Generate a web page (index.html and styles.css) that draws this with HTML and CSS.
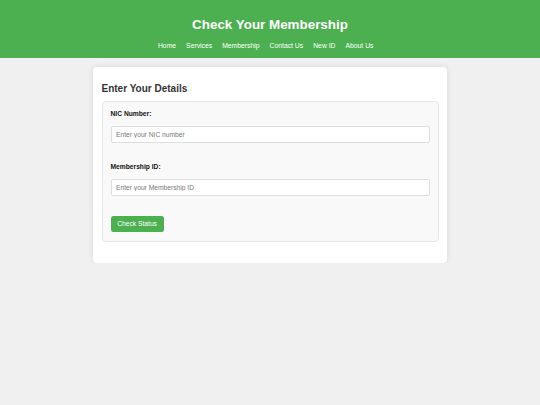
FILE: index.html
```html
<!DOCTYPE html>
<html lang="en">
<head>
<meta charset="utf-8">
<title>Check Your Membership</title>
<link rel="stylesheet" href="styles.css">
</head>
<body>
<header class="site-header">
  <h1 class="site-title">Check Your Membership</h1>
  <nav class="site-nav">
    <a href="#">Home</a>
    <a href="#">Services</a>
    <a href="#">Membership</a>
    <a href="#">Contact Us</a>
    <a href="#">New ID</a>
    <a href="#">About Us</a>
  </nav>
</header>
<main class="card">
  <h2 class="card-title">Enter Your Details</h2>
  <form class="form-box">
    <div class="field">
      <label class="field-label" for="nic">NIC Number:</label>
      <input class="field-input" id="nic" type="text" placeholder="Enter your NIC number">
    </div>
    <div class="field">
      <label class="field-label" for="mid">Membership ID:</label>
      <input class="field-input" id="mid" type="text" placeholder="Enter your Membership ID">
    </div>
    <button class="btn" type="button">Check Status</button>
  </form>
</main>
</body>
</html>
```

FILE: styles.css
```css
* { box-sizing: border-box; }

html, body {
  margin: 0;
  padding: 0;
}

body {
  background: #f0f0f0;
  font-family: "Liberation Sans", Arial, sans-serif;
  color: #333;
}

.site-header {
  background: #4caf50;
  color: #fff;
  text-align: center;
  padding: 16.5px 0 0;
  height: 58px;
}

.site-title {
  margin: 0 0 10px;
  font-size: 13.4px;
  line-height: 15.4px;
  font-weight: bold;
}

.site-nav {
  display: flex;
  justify-content: center;
  gap: 10px;
  padding-right: 8.6px;
  font-size: 6.8px;
  line-height: 7.8px;
}

.site-nav a {
  color: #fff;
  text-decoration: none;
}

.card {
  width: 354px;
  margin: 9px auto 0;
  background: #fff;
  border-radius: 4px;
  box-shadow: 0 0 6px rgba(0, 0, 0, 0.1);
  padding: 8.7px 8.5px 21px;
}

.card-title {
  margin: 7.5px 0 6.5px;
  font-size: 10px;
  line-height: 11.5px;
  font-weight: bold;
  color: #333;
}

.form-box {
  background: #f9f9f9;
  border: 1px solid #e6e6e6;
  border-radius: 4px;
  padding: 8px 8px 8.7px;
  display: flex;
  flex-direction: column;
}

.field {
  display: flex;
  flex-direction: column;
  margin-bottom: 20.3px;
}

.field-label {
  font-size: 6.7px;
  line-height: 7.7px;
  font-weight: bold;
  color: #111;
  margin-bottom: 8.5px;
}

.field-input {
  height: 16.4px;
  border: 1px solid #ddd;
  border-radius: 2px;
  background: #fff;
  padding: 0 4.5px;
  font-family: "Liberation Sans", Arial, sans-serif;
  font-size: 6.7px;
  color: #333;
  outline: none;
}

.field-input::placeholder {
  color: #777;
}

.btn {
  align-self: flex-start;
  height: 16px;
  padding: 0 6.7px;
  background: #4caf50;
  color: #fff;
  border: none;
  border-radius: 2.5px;
  font-family: "Liberation Sans", Arial, sans-serif;
  font-size: 6.7px;
  cursor: pointer;
}
```
